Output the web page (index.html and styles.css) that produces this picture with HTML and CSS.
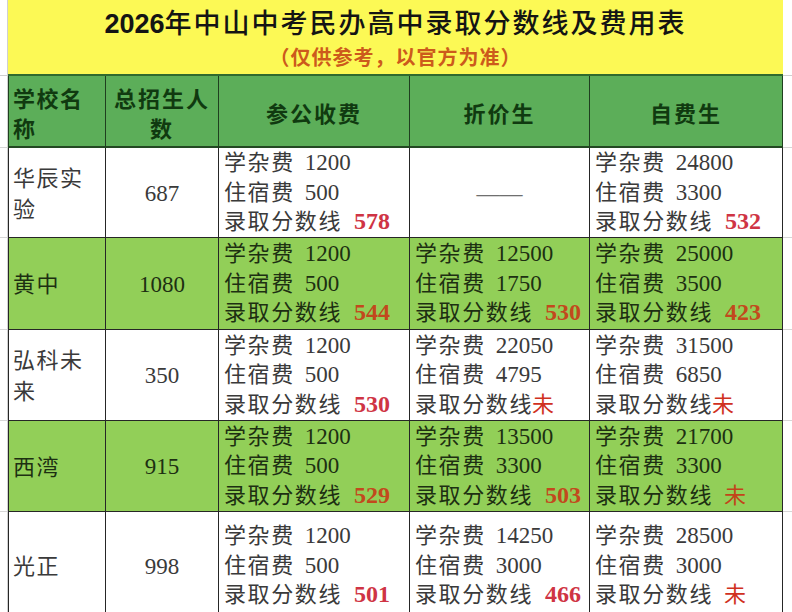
FILE: index.html
```html
<!DOCTYPE html>
<html lang="zh-CN">
<head>
<meta charset="utf-8">
<title>2026年中山中考民办高中录取分数线及费用表</title>
<link rel="stylesheet" href="styles.css">
</head>
<body>
<div class="sheet">
  <!-- title row -->
  <div class="side side-l title-side"></div>
  <div class="title-band">
    <div class="title"><span class="yr">2026</span>年中山中考民办高中录取分数线及费用表</div>
    <div class="sub">（仅供参考，以官方为准）</div>
  </div>
  <div class="side side-r title-side"></div>

  <!-- header row -->
  <div class="side side-l"></div>
  <div class="hc hc-first left">学校名<br>称</div>
  <div class="hc">总招生人<br>数</div>
  <div class="hc">参公收费</div>
  <div class="hc">折价生</div>
  <div class="hc">自费生</div>
  <div class="side side-r"></div>

  <!-- row 1 -->
  <div class="side side-l"></div>
  <div class="c c-first name">华辰实<br>验</div>
  <div class="c num">687</div>
  <div class="c fee"><div><span class="lb">学杂费</span><span class="v">1200</span></div><div><span class="lb">住宿费</span><span class="v">500</span></div><div><span class="lb">录取分数线</span><span class="sc">578</span></div></div>
  <div class="c dash">——</div>
  <div class="c fee"><div><span class="lb">学杂费</span><span class="v">24800</span></div><div><span class="lb">住宿费</span><span class="v">3300</span></div><div><span class="lb">录取分数线</span><span class="sc">532</span></div></div>
  <div class="side side-r"></div>

  <!-- row 2 -->
  <div class="side side-l"></div>
  <div class="c c-first g name">黄中</div>
  <div class="c g num">1080</div>
  <div class="c g fee"><div><span class="lb">学杂费</span><span class="v">1200</span></div><div><span class="lb">住宿费</span><span class="v">500</span></div><div><span class="lb">录取分数线</span><span class="sc">544</span></div></div>
  <div class="c g fee"><div><span class="lb">学杂费</span><span class="v">12500</span></div><div><span class="lb">住宿费</span><span class="v">1750</span></div><div><span class="lb">录取分数线</span><span class="sc">530</span></div></div>
  <div class="c g fee"><div><span class="lb">学杂费</span><span class="v">25000</span></div><div><span class="lb">住宿费</span><span class="v">3500</span></div><div><span class="lb">录取分数线</span><span class="sc">423</span></div></div>
  <div class="side side-r"></div>

  <!-- row 3 -->
  <div class="side side-l"></div>
  <div class="c c-first name">弘科未<br>来</div>
  <div class="c num">350</div>
  <div class="c fee"><div><span class="lb">学杂费</span><span class="v">1200</span></div><div><span class="lb">住宿费</span><span class="v">500</span></div><div><span class="lb">录取分数线</span><span class="sc">530</span></div></div>
  <div class="c fee"><div><span class="lb">学杂费</span><span class="v">22050</span></div><div><span class="lb">住宿费</span><span class="v">4795</span></div><div><span class="lb">录取分数线</span><span class="wei tight">未</span></div></div>
  <div class="c fee"><div><span class="lb">学杂费</span><span class="v">31500</span></div><div><span class="lb">住宿费</span><span class="v">6850</span></div><div><span class="lb">录取分数线</span><span class="wei tight">未</span></div></div>
  <div class="side side-r"></div>

  <!-- row 4 -->
  <div class="side side-l"></div>
  <div class="c c-first g name">西湾</div>
  <div class="c g num">915</div>
  <div class="c g fee"><div><span class="lb">学杂费</span><span class="v">1200</span></div><div><span class="lb">住宿费</span><span class="v">500</span></div><div><span class="lb">录取分数线</span><span class="sc">529</span></div></div>
  <div class="c g fee"><div><span class="lb">学杂费</span><span class="v">13500</span></div><div><span class="lb">住宿费</span><span class="v">3300</span></div><div><span class="lb">录取分数线</span><span class="sc">503</span></div></div>
  <div class="c g fee"><div><span class="lb">学杂费</span><span class="v">21700</span></div><div><span class="lb">住宿费</span><span class="v">3300</span></div><div><span class="lb">录取分数线</span><span class="wei">未</span></div></div>
  <div class="side side-r"></div>

  <!-- row 5 -->
  <div class="side side-l"></div>
  <div class="c c-first name">光正</div>
  <div class="c num">998</div>
  <div class="c fee"><div><span class="lb">学杂费</span><span class="v">1200</span></div><div><span class="lb">住宿费</span><span class="v">500</span></div><div><span class="lb">录取分数线</span><span class="sc">501</span></div></div>
  <div class="c fee"><div><span class="lb">学杂费</span><span class="v">14250</span></div><div><span class="lb">住宿费</span><span class="v">3000</span></div><div><span class="lb">录取分数线</span><span class="sc">466</span></div></div>
  <div class="c fee"><div><span class="lb">学杂费</span><span class="v">28500</span></div><div><span class="lb">住宿费</span><span class="v">3000</span></div><div><span class="lb">录取分数线</span><span class="wei">未</span></div></div>
  <div class="side side-r"></div>
</div>
</body>
</html>
```

FILE: styles.css
```css
* { box-sizing: border-box; }

html, body {
  margin: 0;
  padding: 0;
  background: #ffffff;
}

body {
  width: 792px;
  height: 612px;
  overflow: hidden;
  font-family: "Liberation Serif", "Noto Sans CJK SC", serif;
  color: #333333;
}

.sheet {
  display: grid;
  grid-template-columns: 8px 98px 113px 191px 180px 193px 1fr;
  grid-template-rows: 76px 72px 90px 92px 91px 91px 108px;
}

/* spreadsheet gridlines outside the table */
.side {
  border-bottom: 1px solid #d6d6d6;
}
.side-l { border-right: 1px solid #d0d0d0; }
.title-side { border-bottom: 1px solid #cfcfcf; }

/* title */
.title-band {
  grid-column: 2 / 7;
  background: #fcf955;
  border-bottom: 2px solid #2f6a2f;
  display: flex;
  flex-direction: column;
  align-items: center;
  padding-top: 6px;
}
.title {
  font-family: "Liberation Sans", "Noto Sans CJK SC", sans-serif;
  font-weight: 500;
  font-size: 27px;
  line-height: 36px;
  letter-spacing: 2px;
  color: #141414;
}
.title .yr {
  font-weight: 700;
  letter-spacing: 0;
}
.sub {
  font-family: "Noto Sans CJK SC", sans-serif;
  font-weight: 700;
  font-size: 20px;
  line-height: 28px;
  letter-spacing: 1px;
  color: #cc5a1c;
  margin-top: 1px;
}

/* header */
.hc {
  background: #5cae59;
  border-right: 1px solid #1f3f1f;
  border-bottom: 2px solid #234823;
  font-family: "Noto Sans CJK SC", sans-serif;
  font-weight: 700;
  font-size: 22px;
  line-height: 30px;
  letter-spacing: 2px;
  color: #103a10;
  display: flex;
  align-items: center;
  justify-content: center;
  text-align: center;
  padding-top: 1px;
}
.hc-first { border-left: 1px solid #1f3f1f; }
.hc.left {
  justify-content: flex-start;
  text-align: left;
  padding-left: 4px;
  letter-spacing: 1.5px;
}

/* body cells */
.c {
  border-right: 1px solid #262626;
  border-bottom: 1px solid #262626;
  font-size: 22px;
  line-height: 29.5px;
  display: flex;
  flex-direction: column;
  justify-content: center;
  background: #ffffff;
  color: #3a3a3a;
}
.c-first { border-left: 1px solid #262626; }
.c.g {
  background: #92cf58;
  color: #1d2f12;
}

.name {
  padding-left: 4px;
  letter-spacing: 1.5px;
  line-height: 31px;
  padding-top: 2px;
}
.num {
  align-items: center;
  font-size: 23px;
  padding-top: 2px;
}
.dash {
  align-items: center;
  color: #6f6f6f;
  font-family: "Liberation Serif", serif;
  font-size: 23px;
  letter-spacing: 0;
  padding-top: 2px;
}
.fee {
  padding-left: 5px;
  white-space: nowrap;
}
.lb {
  letter-spacing: 1.6px;
}
.v {
  font-size: 23px;
  margin-left: 10px;
}
.sc {
  font-weight: 700;
  font-size: 24px;
  margin-left: 12px;
  color: #cf3444;
}
.g .sc {
  color: #c2491d;
}
.wei {
  margin-left: 11px;
  color: #d0301e;
}
.wei.tight {
  margin-left: -1px;
}
.g .wei {
  color: #c2441a;
}
```
